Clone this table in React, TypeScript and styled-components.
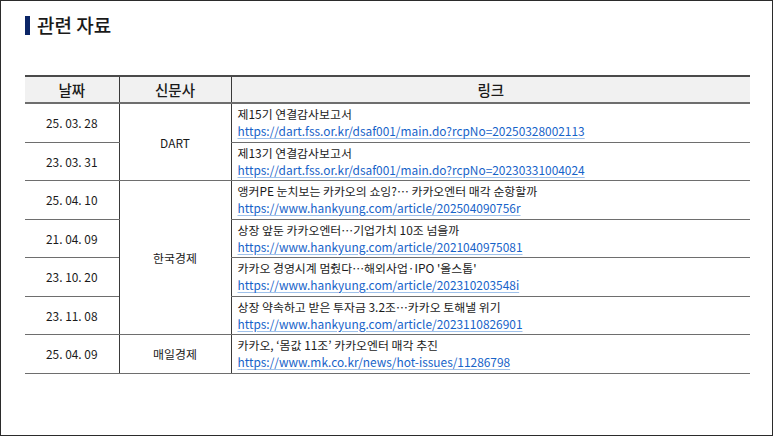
import React from "react";
import styled, { createGlobalStyle } from "styled-components";

const GlobalStyle = createGlobalStyle`
  html, body {
    margin: 0;
    padding: 0;
    background: #ffffff;
  }
  body {
    font-family: "Noto Sans CJK KR", "Noto Sans", sans-serif;
  }
`;

const Page = styled.div`
  box-sizing: border-box;
  width: 773px;
  height: 436px;
  border: 1.5px solid #2b2b2b;
  padding: 12px 22px 0 24px;
  background: #ffffff;
`;

const Title = styled.h2`
  display: flex;
  align-items: center;
  gap: 7px;
  margin: 0;
  font-size: 19px;
  font-weight: 500;
  color: #1a1a1a;
  line-height: 24px;
`;

const TitleBar = styled.span`
  display: inline-block;
  width: 5px;
  height: 19px;
  background: #0b2566;
`;

const Table = styled.table`
  margin-top: 38px;
  width: 725px;
  border-collapse: collapse;
  table-layout: fixed;
  font-size: 11.9px;
  color: #1a1a1a;
`;

const HeadCell = styled.th`
  background: #f1f1f1;
  height: 25px;
  padding: 0;
  font-size: 14.5px;
  font-weight: 500;
  border-top: 2px solid #4a4a4a;
  border-bottom: 2px solid #6e6e6e;
  border-left: 1px solid #3a3a3a;
  &:first-child {
    border-left: none;
  }
`;

const Cell = styled.td<{ $align?: "left" | "center" }>`
  height: 37.5px;
  padding: 0 6px;
  text-align: ${(p) => p.$align ?? "center"};
  vertical-align: middle;
  border-bottom: 1.5px solid #6e6e6e;
  border-left: 1px solid #3a3a3a;
  &:first-child {
    border-left: none;
  }
`;

const Headline = styled.div`
  line-height: 16px;
  white-space: nowrap;
`;

const Link = styled.a`
  display: inline-block;
  line-height: 16px;
  color: #1763c9;
  text-decoration: underline;
  text-decoration-color: #9fc1ea;
  text-underline-offset: 2px;
  white-space: nowrap;
`;

type Item = {
  date: string;
  source?: string;
  span?: number;
  title: string;
  url: string;
};

const items: Item[] = [
  {
    date: "25. 03. 28",
    source: "DART",
    span: 2,
    title: "제15기 연결감사보고서",
    url: "https://dart.fss.or.kr/dsaf001/main.do?rcpNo=20250328002113",
  },
  {
    date: "23. 03. 31",
    title: "제13기 연결감사보고서",
    url: "https://dart.fss.or.kr/dsaf001/main.do?rcpNo=20230331004024",
  },
  {
    date: "25. 04. 10",
    source: "한국경제",
    span: 4,
    title: "앵커PE 눈치보는 카카오의 쇼잉?… 카카오엔터 매각 순항할까",
    url: "https://www.hankyung.com/article/202504090756r",
  },
  {
    date: "21. 04. 09",
    title: "상장 앞둔 카카오엔터…기업가치 10조 넘을까",
    url: "https://www.hankyung.com/article/2021040975081",
  },
  {
    date: "23. 10. 20",
    title: "카카오 경영시계 멈췄다…해외사업·IPO '올스톱'",
    url: "https://www.hankyung.com/article/202310203548i",
  },
  {
    date: "23. 11. 08",
    title: "상장 약속하고 받은 투자금 3.2조…카카오 토해낼 위기",
    url: "https://www.hankyung.com/article/2023110826901",
  },
  {
    date: "25. 04. 09",
    source: "매일경제",
    span: 1,
    title: "카카오, ‘몸값 11조’ 카카오엔터 매각 추진",
    url: "https://www.mk.co.kr/news/hot-issues/11286798",
  },
];

export default function App() {
  return (
    <>
      <GlobalStyle />
      <Page>
        <Title>
          <TitleBar />
          관련 자료
        </Title>
        <Table>
          <colgroup>
            <col style={{ width: 94 }} />
            <col style={{ width: 112 }} />
            <col />
          </colgroup>
          <thead>
            <tr>
              <HeadCell>날짜</HeadCell>
              <HeadCell>신문사</HeadCell>
              <HeadCell>링크</HeadCell>
            </tr>
          </thead>
          <tbody>
            {items.map((it) => (
              <tr key={it.url}>
                <Cell>{it.date}</Cell>
                {it.source && <Cell rowSpan={it.span}>{it.source}</Cell>}
                <Cell $align="left">
                  <Headline>{it.title}</Headline>
                  <Link href={it.url}>{it.url}</Link>
                </Cell>
              </tr>
            ))}
          </tbody>
        </Table>
      </Page>
    </>
  );
}
